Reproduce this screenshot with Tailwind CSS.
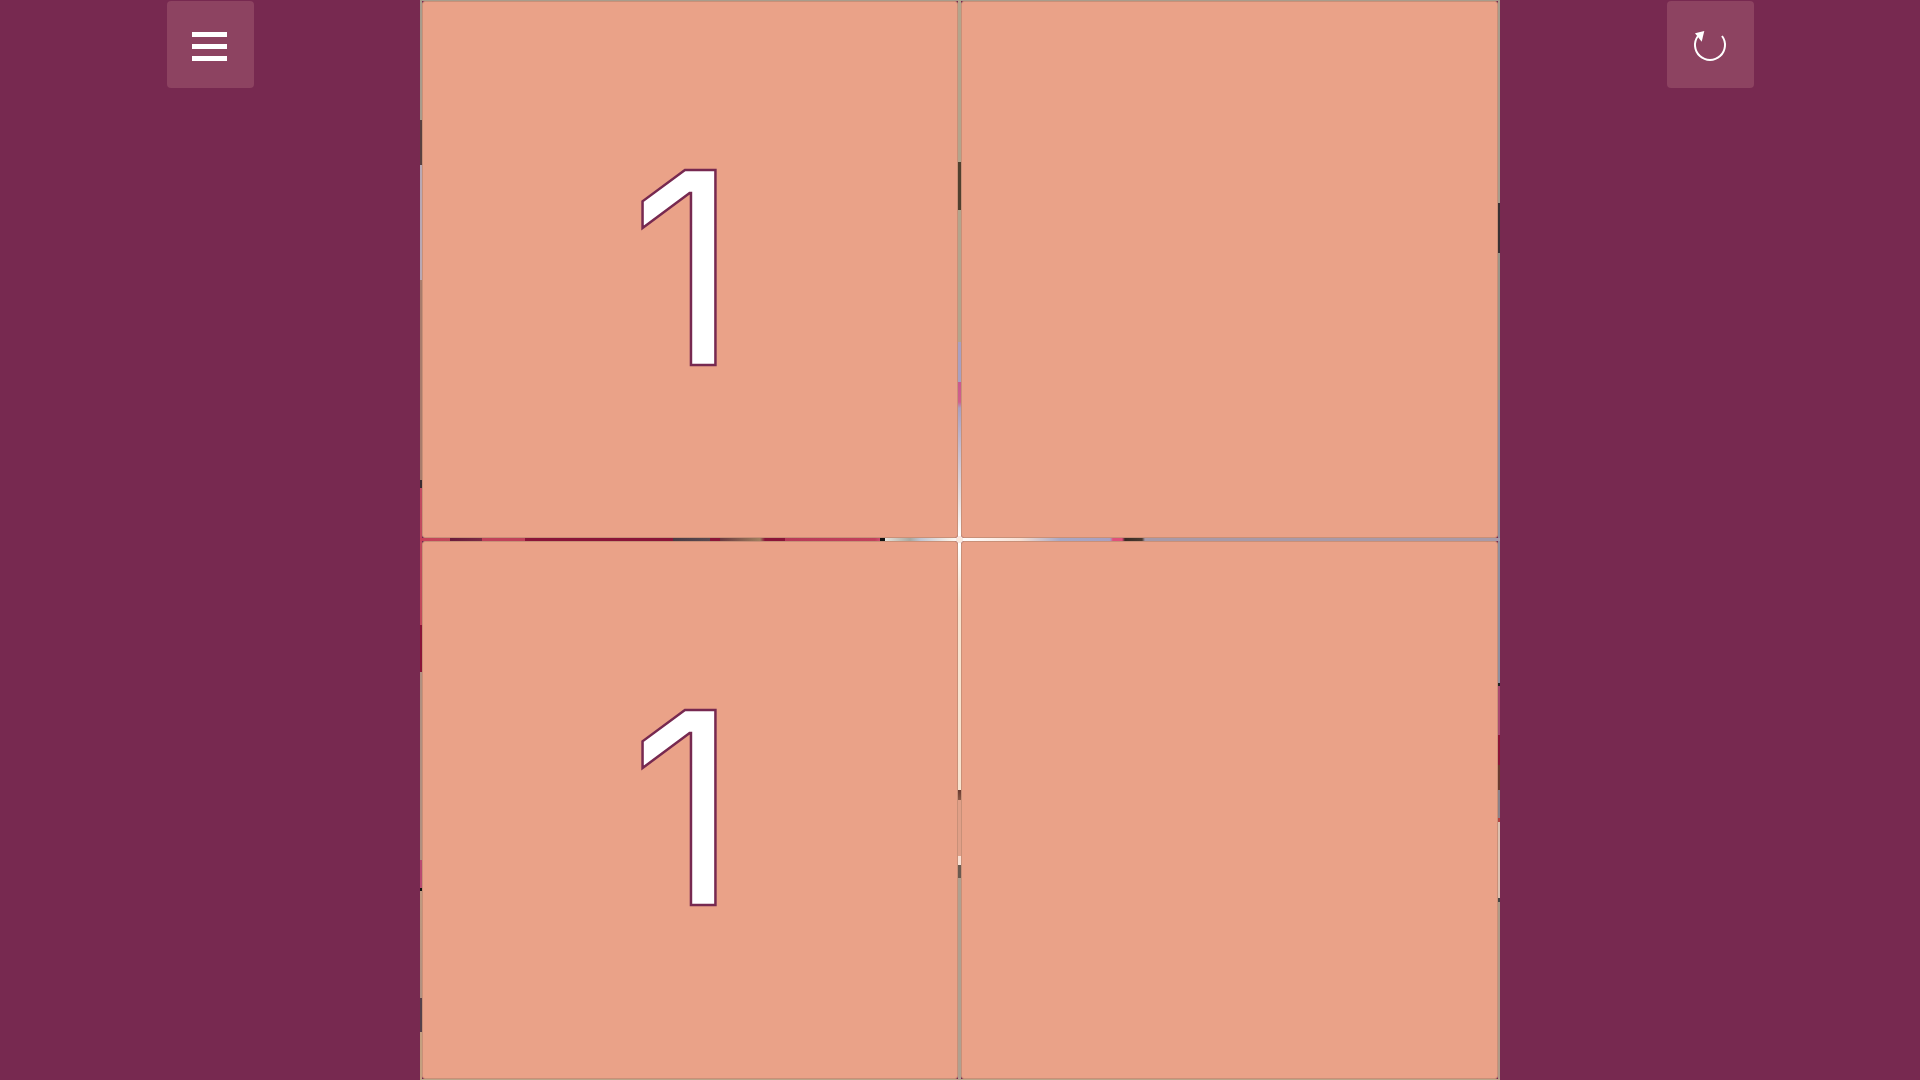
<!DOCTYPE html>
<html lang="en">
<head>
<meta charset="utf-8">
<title>Tile game</title>
<script src="https://cdn.jsdelivr.net/npm/@tailwindcss/browser@4"></script>
</head>
<body class="m-0 h-screen w-screen overflow-hidden bg-[#772950] [font-family:Inter,'Liberation_Sans',Arial,sans-serif]">
<div class="flex h-[1080px] w-[1920px]">
  <div class="w-[420px] h-full pl-[166.5px] pt-px">
    <button aria-label="menu" class="w-[87px] h-[87px] rounded-[4px] bg-[#8d4361] flex flex-col items-center justify-center gap-[7px] pt-[4px] pr-px">
      <span class="block w-[35px] h-[5px] bg-white"></span>
      <span class="block w-[35px] h-[5px] bg-white"></span>
      <span class="block w-[35px] h-[5px] bg-white"></span>
    </button>
  </div>
  <main class="relative w-[1080px] h-full">
    <div class="absolute left-0 top-0 w-[2px] h-full bg-[linear-gradient(to_bottom,#a89c8c_0px,#a89c8c_120px,#5a4040_120px,#5a4040_165px,#b8a8b4_165px,#b8a8b4_280px,#a87c6c_280px,#a87c6c_480px,#3a2a30_480px,#3a2a30_488px,#c04a60_488px,#c0485a_625px,#8a1438_625px,#8a1438_672px,#b09080_672px,#b09080_860px,#b84a70_860px,#b84a70_888px,#111_888px,#111_891px,#c09a80_891px,#b09080_998px,#55404a_998px,#55404a_1032px,#c4a080_1032px,#c4a080_1080px)]"></div>
    <div class="absolute right-0 top-0 w-[2px] h-full bg-[linear-gradient(to_bottom,#a89c8c_0px,#a89c8c_203px,#3a3034_203px,#3a3034_253px,#9a9488_253px,#9a9488_400px,#8f8f9f_400px,#8f8f9f_683px,#222_683px,#222_686px,#a84a70_686px,#a84a70_735px,#8a1438_735px,#8a1438_765px,#6a3a30_765px,#6a3a30_790px,#8a8088_790px,#8a8088_818px,#b04040_818px,#b04040_822px,#dcc0b0_822px,#dcc0b0_898px,#444_898px,#444_902px,#b09a88_902px,#b09a88_1080px)]"></div>
    <div class="absolute left-0 top-0 w-full h-px bg-[#a89c8c]"></div>
    <div class="absolute left-0 bottom-0 w-full h-px bg-[#b8a488]"></div>
    <div class="absolute left-0 top-[538px] w-full h-[3px] bg-[linear-gradient(to_right,#c8405a_0px,#bf4a5a_30px,#6a1a3a_30px,#7a2a44_62px,#c0425a_62px,#c0425a_105px,#8a1438_105px,#8a1438_253px,#4a3a44_253px,#5a4a50_290px,#8a1438_290px,#8a1438_300px,#6a3a40_300px,#a08060_340px,#8a1438_345px,#8a1438_365px,#b83a58_365px,#c2415c_455px,#d05070_460px,#111_460px,#111_465px,#e8e4dc_465px,#a8a8a0_490px,#c0c4d0_500px,#f8f0e8_530px,#fff_540px,#f8e0d4_600px,#a8a8c4_640px,#a8a0c0_690px,#e0507a_693px,#e0507a_702px,#3a2a24_705px,#4a3a30_722px,#a89aa8_725px,#a89aa8_1080px)]"></div>
    <div class="absolute top-0 left-[538px] w-[3px] h-full bg-[linear-gradient(to_bottom,#b4a48c_0px,#b4a48c_162px,#50402f_162px,#50402f_210px,#b4a48c_210px,#b4a48c_342px,#a8a0c0_342px,#a8a0c0_382px,#c85a90_382px,#d0608a_402px,#a8a0c0_408px,#e8e0e0_500px,#fff_535px,#fff_545px,#f8e4d0_600px,#f8e4d0_790px,#6a3a30_790px,#8a5a48_800px,#e0a088_800px,#e0a088_856px,#f8e0d4_856px,#f8e0d4_865px,#6a5a50_865px,#6a5a50_878px,#b0a090_878px,#b0a090_1080px)]"></div>
    <div class="absolute left-[536px] top-[536px] w-[7px] h-[7px] rounded-full bg-[#fbe8dc] z-20"></div>
    <div class="relative z-10 grid grid-cols-[536px_537px] grid-rows-[537px_538px] gap-[3px] w-full h-full px-[2px] py-px">
      <div class="rounded-[3px] border border-[#c99078] bg-[#eaa288] flex items-center justify-center">
        <span class="text-[268px] leading-none text-white [-webkit-text-stroke:2.5px_#772950] pb-[4px] pr-[11px]">1</span>
      </div>
      <div class="rounded-[3px] border border-[#c99078] bg-[#eaa288]"></div>
      <div class="rounded-[3px] border border-[#c99078] bg-[#eaa288] flex items-center justify-center">
        <span class="text-[268px] leading-none text-white [-webkit-text-stroke:2.5px_#772950] pb-[4px] pr-[11px]">1</span>
      </div>
      <div class="rounded-[3px] border border-[#c99078] bg-[#eaa288]"></div>
    </div>
  </main>
  <div class="w-[420px] h-full pl-[166.5px] pt-px">
    <button aria-label="restart" class="w-[87px] h-[87px] rounded-[4px] bg-[#8d4361] flex items-center justify-center">
      <svg viewBox="0 0 40 40" class="w-10 h-10" fill="none">
        <path d="M32 11 A15 15 0 1 1 8 11" stroke="#fff" stroke-width="2"/>
        <path d="M14.3 6 L5 8.3 L11.7 16.7 Z" fill="#fff"/>
      </svg>
    </button>
  </div>
</div>
</body>
</html>
